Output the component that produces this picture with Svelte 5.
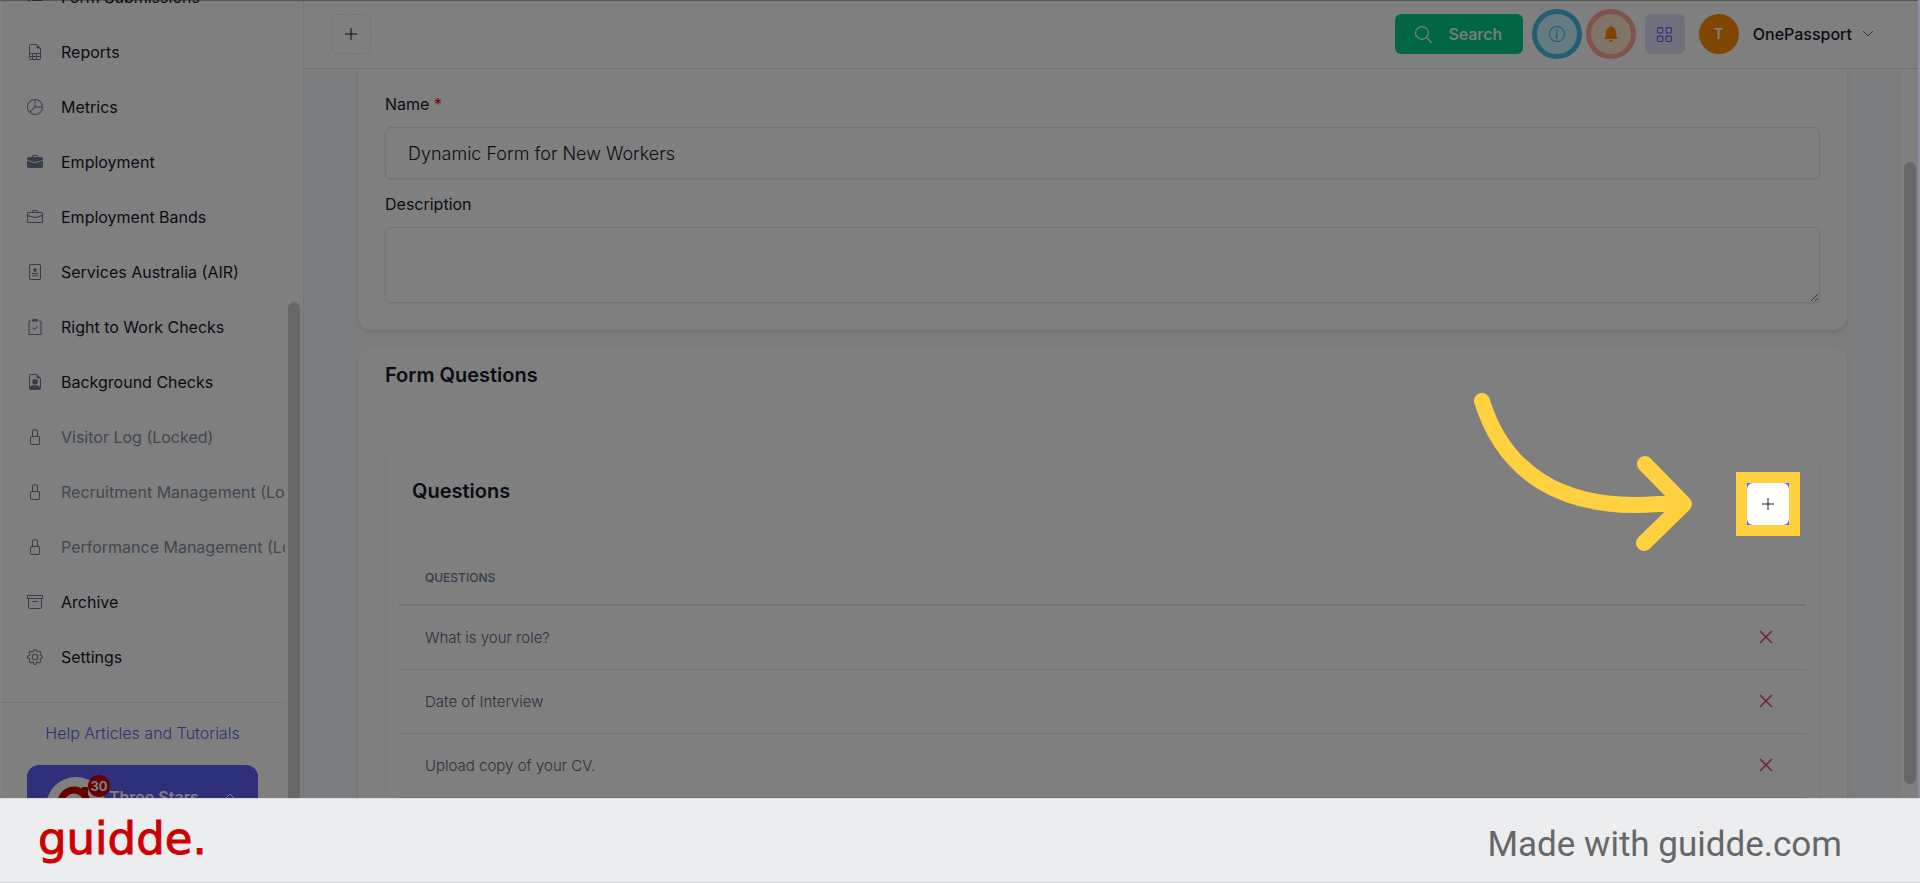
<script lang="ts">
    interface NavItem {
        label: string;
        icon: string;
        locked?: boolean;
    }

    const navItems: NavItem[] = [
        { label: "Form Submissions", icon: "list" },
        { label: "Reports", icon: "report" },
        { label: "Metrics", icon: "pie" },
        { label: "Employment", icon: "briefcaseFill" },
        { label: "Employment Bands", icon: "briefcase" },
        { label: "Services Australia (AIR)", icon: "person" },
        { label: "Right to Work Checks", icon: "clipboard" },
        { label: "Background Checks", icon: "filePerson" },
        { label: "Visitor Log (Locked)", icon: "lock", locked: true },
        { label: "Recruitment Management (Locked)", icon: "lock", locked: true },
        { label: "Performance Management (Locked)", icon: "lock", locked: true },
        { label: "Archive", icon: "archive" },
        { label: "Settings", icon: "gear" },
    ];

    // 16x16 icon paths
    const icons: Record<string, string> = {
        list: "M5 11.5a.5.5 0 0 1 .5-.5h9a.5.5 0 0 1 0 1h-9a.5.5 0 0 1-.5-.5zm0-4a.5.5 0 0 1 .5-.5h9a.5.5 0 0 1 0 1h-9a.5.5 0 0 1-.5-.5zm0-4a.5.5 0 0 1 .5-.5h9a.5.5 0 0 1 0 1h-9a.5.5 0 0 1-.5-.5zm-3 1a1 1 0 1 0 0-2 1 1 0 0 0 0 2zm0 4a1 1 0 1 0 0-2 1 1 0 0 0 0 2zm0 4a1 1 0 1 0 0-2 1 1 0 0 0 0 2z",
        report: "M14 14V4.5L9.5 0H4a2 2 0 0 0-2 2v12a2 2 0 0 0 2 2h8a2 2 0 0 0 2-2zM9.5 3A1.500 1.500 0 0 0 11 4.500h2V9H3V2a1 1 0 0 1 1-1h5.500v2zM3 12v-2h2v2H3zm0 1h2v2H4a1 1 0 0 1-1-1v-1zm3 2v-2h3v2H6zm4 0v-2h3v1a1 1 0 0 1-1 1h-2zm3-3h-3v-2h3v2zm-7 0v-2h3v2H6z",
        pie: "M7.5 1.018a7 7 0 0 0-4.790 11.566L7.500 7.793V1.018zm1 0V7.500h6.482A7.001 7.001 0 0 0 8.500 1.018zM14.982 8.500H8.207l-4.790 4.790A7 7 0 0 0 14.982 8.500zM0 8a8 8 0 1 1 16 0A8 8 0 0 1 0 8z",
        briefcaseFill:
            "M6.500 1A1.500 1.500 0 0 0 5 2.500V3H1.500A1.500 1.500 0 0 0 0 4.500v1.384l7.614 2.030a1.500 1.500 0 0 0 .772 0L16 5.884V4.500A1.500 1.500 0 0 0 14.500 3H11v-.5A1.500 1.500 0 0 0 9.500 1h-3zm0 1h3a.5.5 0 0 1 .5.5V3H6v-.5a.5.5 0 0 1 .5-.5zM0 12.500A1.500 1.500 0 0 0 1.500 14h13a1.500 1.500 0 0 0 1.500-1.500V6.850L8.129 8.947a.5.5 0 0 1-.258 0L0 6.850v5.650z",
        briefcase:
            "M6.500 1A1.500 1.500 0 0 0 5 2.500V3H1.500A1.500 1.500 0 0 0 0 4.500v8A1.500 1.500 0 0 0 1.500 14h13a1.500 1.500 0 0 0 1.500-1.500v-8A1.500 1.500 0 0 0 14.500 3H11v-.5A1.500 1.500 0 0 0 9.500 1h-3zm0 1h3a.5.5 0 0 1 .5.5V3H6v-.5a.5.5 0 0 1 .5-.5zm1.886 6.914L15 7.151V12.500a.5.5 0 0 1-.5.5h-13a.5.5 0 0 1-.5-.5V7.150l6.614 1.764a1.500 1.500 0 0 0 .772 0zM1.500 4h13a.5.5 0 0 1 .5.5v1.616L8.129 7.948a.5.5 0 0 1-.258 0L1 6.116V4.500a.5.5 0 0 1 .5-.5z",
        person: "M4 0a2 2 0 0 0-2 2v12a2 2 0 0 0 2 2h8a2 2 0 0 0 2-2V2a2 2 0 0 0-2-2H4zm0 1h8a1 1 0 0 1 1 1v12a1 1 0 0 1-1 1H4a1 1 0 0 1-1-1V2a1 1 0 0 1 1-1zM8 4.200a1.800 1.800 0 1 1 0 3.600 1.800 1.800 0 0 1 0-3.600zM5 9h6v1H5zM5 11.300h6v1H5z",
        clipboard:
            "M10.854 7.146a.5.5 0 0 1 0 .708l-3 3a.5.5 0 0 1-.708 0l-1.500-1.500a.5.5 0 1 1 .708-.708L7.500 9.793l2.646-2.647a.5.5 0 0 1 .708 0zM4 1.500H3a1.500 1.500 0 0 0-1.500 1.500v11.500A1.500 1.500 0 0 0 3 16h10a1.500 1.500 0 0 0 1.500-1.500V3A1.500 1.500 0 0 0 13 1.500h-1v1h1a.5.5 0 0 1 .5.5v11.500a.5.5 0 0 1-.5.5H3a.5.5 0 0 1-.5-.5V3a.5.5 0 0 1 .5-.5h1v-1zM5 1.500A1.500 1.500 0 0 1 6.500 0h3A1.500 1.500 0 0 1 11 1.500v1H5v-1z",
        filePerson:
            "M14 14V4.500L9.500 0H4a2 2 0 0 0-2 2v12a2 2 0 0 0 2 2h8a2 2 0 0 0 2-2zM9.500 3A1.500 1.500 0 0 0 11 4.500h2v8.300c-.8-.8-2.300-1.500-5-1.500s-4.200.7-5 1.500V2a1 1 0 0 1 1-1h5.500v2zM8 5a2.800 2.800 0 1 1 0 5.600A2.800 2.800 0 0 1 8 5z",
        lock: "M8 1a2 2 0 0 1 2 2v4H6V3a2 2 0 0 1 2-2zm3 6V3a3 3 0 0 0-6 0v4a2 2 0 0 0-2 2v5a2 2 0 0 0 2 2h6a2 2 0 0 0 2-2V9a2 2 0 0 0-2-2zM5 8h6a1 1 0 0 1 1 1v5a1 1 0 0 1-1 1H5a1 1 0 0 1-1-1V9a1 1 0 0 1 1-1z",
        archive:
            "M0 2a1 1 0 0 1 1-1h14a1 1 0 0 1 1 1v2a1 1 0 0 1-1 1v7.500a2.500 2.500 0 0 1-2.500 2.500h-9A2.500 2.500 0 0 1 1 12.500V5a1 1 0 0 1-1-1V2zm2 3v7.500A1.500 1.500 0 0 0 3.500 14h9a1.500 1.500 0 0 0 1.500-1.500V5H2zm13-3H1v2h14V2zM5 7.500a.5.5 0 0 1 .5-.5h5a.5.5 0 0 1 0 1h-5a.5.5 0 0 1-.5-.5z",
        gear: "M8 4.754a3.246 3.246 0 1 0 0 6.492 3.246 3.246 0 0 0 0-6.492zM5.754 8a2.246 2.246 0 1 1 4.492 0 2.246 2.246 0 0 1-4.492 0z M9.796 1.343c-.527-1.790-3.065-1.790-3.592 0l-.094.319a.873.873 0 0 1-1.255.520l-.292-.160c-1.640-.892-3.433.902-2.540 2.541l.159.292a.873.873 0 0 1-.520 1.255l-.319.094c-1.790.527-1.790 3.065 0 3.592l.319.094a.873.873 0 0 1 .520 1.255l-.160.292c-.892 1.640.901 3.434 2.541 2.540l.292-.159a.873.873 0 0 1 1.255.520l.094.319c.527 1.790 3.065 1.790 3.592 0l.094-.319a.873.873 0 0 1 1.255-.520l.292.160c1.640.893 3.434-.902 2.540-2.541l-.159-.292a.873.873 0 0 1 .520-1.255l.319-.094c1.790-.527 1.790-3.065 0-3.592l-.319-.094a.873.873 0 0 1-.520-1.255l.160-.292c.893-1.640-.902-3.433-2.541-2.540l-.292.159a.873.873 0 0 1-1.255-.520l-.094-.319zm-2.633.283c.246-.835 1.428-.835 1.674 0l.094.319a1.873 1.873 0 0 0 2.693 1.115l.291-.160c.764-.415 1.600.420 1.184 1.185l-.159.292a1.873 1.873 0 0 0 1.116 2.692l.318.094c.835.246.835 1.428 0 1.674l-.319.094a1.873 1.873 0 0 0-1.115 2.693l.160.291c.415.764-.420 1.600-1.185 1.184l-.291-.159a1.873 1.873 0 0 0-2.693 1.116l-.094.318c-.246.835-1.428.835-1.674 0l-.094-.319a1.873 1.873 0 0 0-2.692-1.115l-.292.160c-.764.415-1.600-.420-1.184-1.185l.159-.291A1.873 1.873 0 0 0 1.945 8.930l-.319-.094c-.835-.246-.835-1.428 0-1.674l.319-.094A1.873 1.873 0 0 0 3.060 4.377l-.160-.292c-.415-.764.420-1.600 1.185-1.184l.292.159a1.873 1.873 0 0 0 2.692-1.115l.094-.319z",
    };

    let name = $state("Dynamic Form for New Workers");
    let description = $state("");
    let questions = $state(["What is your role?", "Date of Interview", "Upload copy of your CV."]);

    function removeQuestion(index: number) {
        questions.splice(index, 1);
    }
</script>

{#snippet plus()}
    <svg class="plus" viewBox="0 0 14 14" aria-hidden="true">
        <path d="M7 1v12M1 7h12" />
    </svg>
{/snippet}

<div class="page">
    <div class="capture">
        <aside class="sidebar">
            <nav>
                {#each navItems as item}
                    <a href="#top" class="nav-item" class:locked={item.locked}>
                        <svg viewBox="0 0 16 16" aria-hidden="true">
                            <path fill-rule="evenodd" d={icons[item.icon]} />
                        </svg>
                        <span>{item.label}</span>
                    </a>
                {/each}
            </nav>
            <div class="sidebar-foot">
                <a href="#help" class="help">Help Articles and Tutorials</a>
                <button class="account">
                    <span class="account-logo">
                        <svg viewBox="0 0 60 60" aria-hidden="true">
                            <circle cx="30" cy="30" r="30" fill="#fff" />
                            <circle cx="28" cy="26" r="13" fill="none" stroke="#cc0000" stroke-width="7" />
                            <path d="M39 10v36" stroke="#cc0000" stroke-width="6" />
                        </svg>
                        <span class="badge">30</span>
                    </span>
                    <span class="account-name">Three Stars</span>
                    <svg class="chevron" viewBox="0 0 12 8" aria-hidden="true">
                        <path d="M1 7l5-5 5 5" />
                    </svg>
                </button>
            </div>
            <div class="side-thumb"></div>
        </aside>

        <div class="content">
            <header>
                <button class="add-tab" aria-label="Add">{@render plus()}</button>
                <button class="search">
                    <svg viewBox="0 0 16 16" aria-hidden="true">
                        <circle cx="6.500" cy="6.500" r="6" />
                        <path d="M10.700 10.700l5 5" />
                    </svg>
                    Search
                </button>
                <button class="round info" aria-label="Information">
                    <svg viewBox="0 0 16 16" aria-hidden="true">
                        <path d="M8 15A7 7 0 1 1 8 1a7 7 0 0 1 0 14zm0 1A8 8 0 1 0 8 0a8 8 0 0 0 0 16z" />
                        <path d="m8.930 6.588-2.290.287-.082.380.450.083c.294.070.352.176.288.469l-.738 3.468c-.194.897.105 1.319.808 1.319.545 0 1.178-.252 1.465-.598l.088-.416c-.200.176-.492.246-.686.246-.275 0-.375-.193-.304-.533L8.930 6.588zM9 4.500a1 1 0 1 1-2 0 1 1 0 0 1 2 0z" />
                    </svg>
                </button>
                <button class="round bell" aria-label="Notifications">
                    <svg viewBox="0 0 16 16" aria-hidden="true">
                        <path d="M8 16a2 2 0 0 0 2-2H6a2 2 0 0 0 2 2zm.995-14.901a1 1 0 1 0-1.990 0A5.002 5.002 0 0 0 3 6c0 1.098-.5 6-2 7h14c-1.500-1-2-5.902-2-7 0-2.420-1.720-4.440-4.005-4.901z" />
                    </svg>
                </button>
                <button class="apps" aria-label="Apps">
                    <svg viewBox="0 0 16 16" aria-hidden="true">
                        <rect x="1.500" y="1.500" width="5" height="5" rx="1" />
                        <rect x="9.500" y="1.500" width="5" height="5" rx="1" />
                        <rect x="1.500" y="9.500" width="5" height="5" rx="1" />
                        <rect x="9.500" y="9.500" width="5" height="5" rx="1" />
                    </svg>
                </button>
                <button class="user">
                    <span class="avatar">T</span>
                    OnePassport
                    <svg class="chevron" viewBox="0 0 12 8" aria-hidden="true">
                        <path d="M1 1l5 5 5-5" />
                    </svg>
                </button>
            </header>

            <div class="scroller">
                <main>
                    <section class="card details">
                        <label for="form-name">Name <span class="required">*</span></label>
                        <input id="form-name" type="text" bind:value={name} />
                        <label for="form-description">Description</label>
                        <textarea id="form-description" bind:value={description}></textarea>
                    </section>

                    <section class="card questions">
                        <h2>Form Questions</h2>
                        <div class="panel">
                            <div class="panel-head">
                                <h2>Questions</h2>
                                <div class="target">
                                    <button class="add-question" aria-label="Add question">{@render plus()}</button>
                                    <svg class="arrow" viewBox="0 0 220 160" aria-hidden="true">
                                        <path d="M9 9C30 77 85 120 185 112H210M172 72L211 112L171 151" />
                                    </svg>
                                </div>
                            </div>
                            <table>
                                <thead>
                                    <tr><th>QUESTIONS</th><th></th></tr>
                                </thead>
                                <tbody>
                                    {#each questions as question, i}
                                        <tr>
                                            <td>{question}</td>
                                            <td class="actions">
                                                <button aria-label="Remove question" onclick={() => removeQuestion(i)}>
                                                    <svg viewBox="0 0 12 12" aria-hidden="true">
                                                        <path d="M0 0l12 12M12 0L0 12" />
                                                    </svg>
                                                </button>
                                            </td>
                                        </tr>
                                    {/each}
                                </tbody>
                            </table>
                        </div>
                    </section>
                </main>
                <div class="track"><div class="thumb"></div></div>
            </div>
        </div>
        <div class="dim"></div>
    </div>

    <footer>
        <span class="brand">guidde.</span>
        <a href="#guidde">Made with guidde.com</a>
    </footer>
</div>

<style>
    :global(body) {
        margin: 0;
    }

    .page {
        display: flex;
        flex-direction: column;
        height: 100vh;
        overflow: hidden;
        font-family: Inter, sans-serif;
        font-size: 16px;
        color: #16192c;
    }

    .page * {
        box-sizing: border-box;
    }

    button {
        display: flex;
        align-items: center;
        justify-content: center;
        padding: 0;
        border: 0;
        background: none;
        font: inherit;
        color: inherit;
        cursor: pointer;
    }

    a {
        color: inherit;
        text-decoration: none;
    }

    .capture {
        position: relative;
        flex: 1;
        min-height: 0;
        display: flex;
        overflow: hidden;
        background: #fff;
        border-right: 2px solid #8a90a0;
    }

    /* dark layer over the whole capture */
    .dim {
        position: absolute;
        inset: 0;
        background: rgba(0, 0, 0, 0.5);
        border-top: 1px solid rgba(0, 0, 0, 0.3);
        border-left: 1px solid #7a8494;
        pointer-events: none;
    }

    .sidebar {
        position: relative;
        flex: none;
        width: 304px;
        padding-right: 18px;
        overflow: hidden;
        border-right: 1px solid #e7eaf0;
    }

    nav {
        display: flex;
        flex-direction: column;
        margin-top: -31px;
        padding-bottom: 18px;
        overflow: hidden;
        border-bottom: 1px solid #e7eaf0;
    }

    .nav-item {
        flex: none;
        display: flex;
        align-items: center;
        gap: 18px;
        height: 55px;
        padding-left: 27px;
        white-space: nowrap;
        font-weight: 400;
    }

    .nav-item svg {
        flex: none;
        width: 16px;
        height: 16px;
        fill: #6b7b93;
    }

    .nav-item.locked {
        color: #8090a0;
    }

    .sidebar-foot {
        display: flex;
        flex-direction: column;
        padding: 18px 27px 0;
    }

    .help {
        height: 44px;
        line-height: 24px;
        text-align: center;
        white-space: nowrap;
        color: #5c60f5;
        font-weight: 300;
    }

    .account {
        align-items: flex-start;
        height: 84px;
        padding: 12px 22px 0 19px;
        border-radius: 12px;
        background: #5c60f5;
        color: #fff;
    }

    .account-logo {
        position: relative;
        flex: none;
        width: 60px;
        height: 60px;
    }

    .account-logo svg {
        width: 60px;
        height: 60px;
    }

    .badge {
        position: absolute;
        top: -2px;
        right: -4px;
        width: 22px;
        height: 22px;
        border-radius: 50%;
        background: #cc0000;
        font-size: 13px;
        font-weight: 700;
        line-height: 22px;
    }

    .account-name {
        flex: 1;
        text-align: left;
        padding-left: 3px;
        font-weight: 600;
        line-height: 40px;
    }

    .account .chevron {
        margin-top: 15px;
        stroke: #fff;
    }

    .chevron {
        width: 12px;
        height: 8px;
        fill: none;
        stroke: #6b7b93;
    }

    .side-thumb {
        position: absolute;
        top: 302px;
        right: 3px;
        width: 12px;
        height: 640px;
        border-radius: 6px;
        background: #d2ccd2;
    }

    .content {
        flex: 1;
        min-width: 0;
        display: flex;
        flex-direction: column;
    }

    header {
        flex: none;
        display: flex;
        align-items: center;
        height: 69px;
        padding: 0 44px 0 27px;
        border-bottom: 1px solid #e0e3ee;
    }

    .plus {
        width: 14px;
        height: 14px;
        stroke: #16192c;
    }

    .add-tab {
        width: 40px;
        height: 40px;
        margin-right: auto;
        border: 1px dashed #e0e3ee;
        border-radius: 6px;
    }

    .search {
        gap: 16px;
        width: 128px;
        height: 40px;
        border-radius: 6px;
        background: #00cc88;
        color: #fff;
        font-weight: 500;
    }

    .search svg {
        width: 17px;
        height: 17px;
        fill: none;
        stroke: #fff;
        stroke-width: 1.2;
        overflow: visible;
    }

    .round {
        width: 50px;
        height: 50px;
        border: 5px solid;
        border-radius: 50%;
    }

    .round svg {
        width: 16px;
        height: 16px;
        fill: currentColor;
    }

    .info {
        margin-left: 9px;
        border-color: #44bfe8;
        background: #ccf6ff;
        color: #30bfe8;
    }

    .bell {
        margin-left: 4px;
        border-color: #ffa898;
        background: #ffe8cc;
        color: #ff8c00;
    }

    .apps {
        width: 40px;
        height: 40px;
        margin-left: 9px;
        border-radius: 6px;
        background: #dedffd;
    }

    .apps svg {
        width: 17px;
        height: 17px;
        fill: none;
        stroke: #5c60f5;
    }

    .user {
        margin-left: 14px;
        font-weight: 500;
    }

    .user .chevron {
        margin-left: 10px;
    }

    .avatar {
        width: 40px;
        height: 40px;
        margin-right: 14px;
        border-radius: 50%;
        background: #ff8c00;
        color: #fff;
        font-size: 14px;
        font-weight: 600;
        line-height: 40px;
    }

    .scroller {
        flex: 1;
        min-height: 0;
        display: flex;
        overflow: hidden;
        background: #f5f9fc;
    }

    main {
        flex: 1;
        min-width: 0;
        padding: 0 55px 0 54px;
    }

    .card {
        display: flex;
        flex-direction: column;
        padding: 0 27px;
        border-radius: 14px;
        background: #fff;
        box-shadow: 0 2px 4px rgba(60, 70, 110, 0.15);
    }

    .details {
        padding-top: 24px;
        padding-bottom: 27px;
        border-radius: 0 0 14px 14px;
    }

    label {
        line-height: 22px;
        font-weight: 400;
        margin-bottom: 12px;
    }

    .required {
        color: #ff0000;
    }

    input,
    textarea {
        width: 100%;
        padding: 0 22px;
        border: 1px solid #e2e5ee;
        border-radius: 6px;
        background: #fff;
        box-shadow: 0 1px 2px rgba(50, 50, 71, 0.08);
        font: inherit;
        font-size: 18px;
        font-weight: 300;
        color: #16192c;
    }

    input {
        height: 52px;
        margin-bottom: 14px;
    }

    textarea {
        display: block;
        height: 76px;
        resize: vertical;
    }

    .questions {
        margin-top: 18px;
        padding-bottom: 27px;
    }

    h2 {
        margin: 0;
        font-size: 20px;
        line-height: 26px;
        font-weight: 600;
    }

    .questions > h2 {
        padding: 14px 0 62px;
    }

    .panel {
        padding: 0 13px 27px;
        border: 1px solid #f7f8fa;
        border-radius: 14px;
        box-shadow: 0 0 2px rgba(50, 50, 71, 0.08);
    }

    .panel-head {
        display: flex;
        justify-content: space-between;
        padding: 21px 6px 0 13px;
        height: 100px;
    }

    .panel-head h2 {
        margin-top: 6px;
    }

    .target {
        position: relative;
        z-index: 2;
        width: 64px;
        height: 64px;
        border: 11px solid #ffd040;
        background: #5c60f5;
    }

    .add-question {
        width: 42px;
        height: 42px;
        border-radius: 6px;
        background: #fff;
    }

    .arrow {
        position: absolute;
        top: -91px;
        right: 96px;
        width: 220px;
        height: 160px;
        fill: none;
        stroke: #ffd040;
        stroke-width: 16;
        stroke-linecap: round;
        stroke-linejoin: round;
        pointer-events: none;
    }

    table {
        width: 100%;
        border-collapse: collapse;
        color: #6b7b93;
    }

    th {
        height: 54px;
        padding: 0 26px;
        border-bottom: 2px solid #e0e3ee;
        font-size: 12px;
        font-weight: 500;
        text-align: left;
    }

    td {
        height: 64px;
        padding: 0 26px;
        border-bottom: 1px solid #e0e3ee;
        font-size: 15px;
        font-weight: 300;
        color: #56657d;
    }

    .actions button {
        margin-left: auto;
        padding: 8px;
    }

    .actions svg {
        width: 12px;
        height: 12px;
        stroke: #ff3366;
        stroke-width: 1.5;
        overflow: visible;
    }

    .track {
        display: flex;
        align-items: flex-end;
        justify-content: center;
        width: 16px;
        padding: 0 1px 14px;
        background: #fff;
    }

    .thumb {
        width: 12px;
        height: 87%;
        border-radius: 6px;
        background: #d2ccd2;
    }

    footer {
        flex: none;
        display: flex;
        align-items: center;
        justify-content: space-between;
        height: 85px;
        padding: 0 78px 0 38px;
        border-top: 1px solid #d8dadc;
        border-bottom: 1px solid #d8dadc;
        box-sizing: border-box;
        background: #ecedef;
    }

    .brand {
        padding-bottom: 4px;
        font-family: "DejaVu Sans", sans-serif;
        font-size: 45px;
        line-height: 52px;
        color: #cc0000;
        -webkit-text-stroke: 1px #cc0000;
    }

    footer a {
        padding-top: 8px;
        font-family: Roboto, sans-serif;
        font-size: 35px;
        line-height: 42px;
        color: #666769;
    }
</style>
